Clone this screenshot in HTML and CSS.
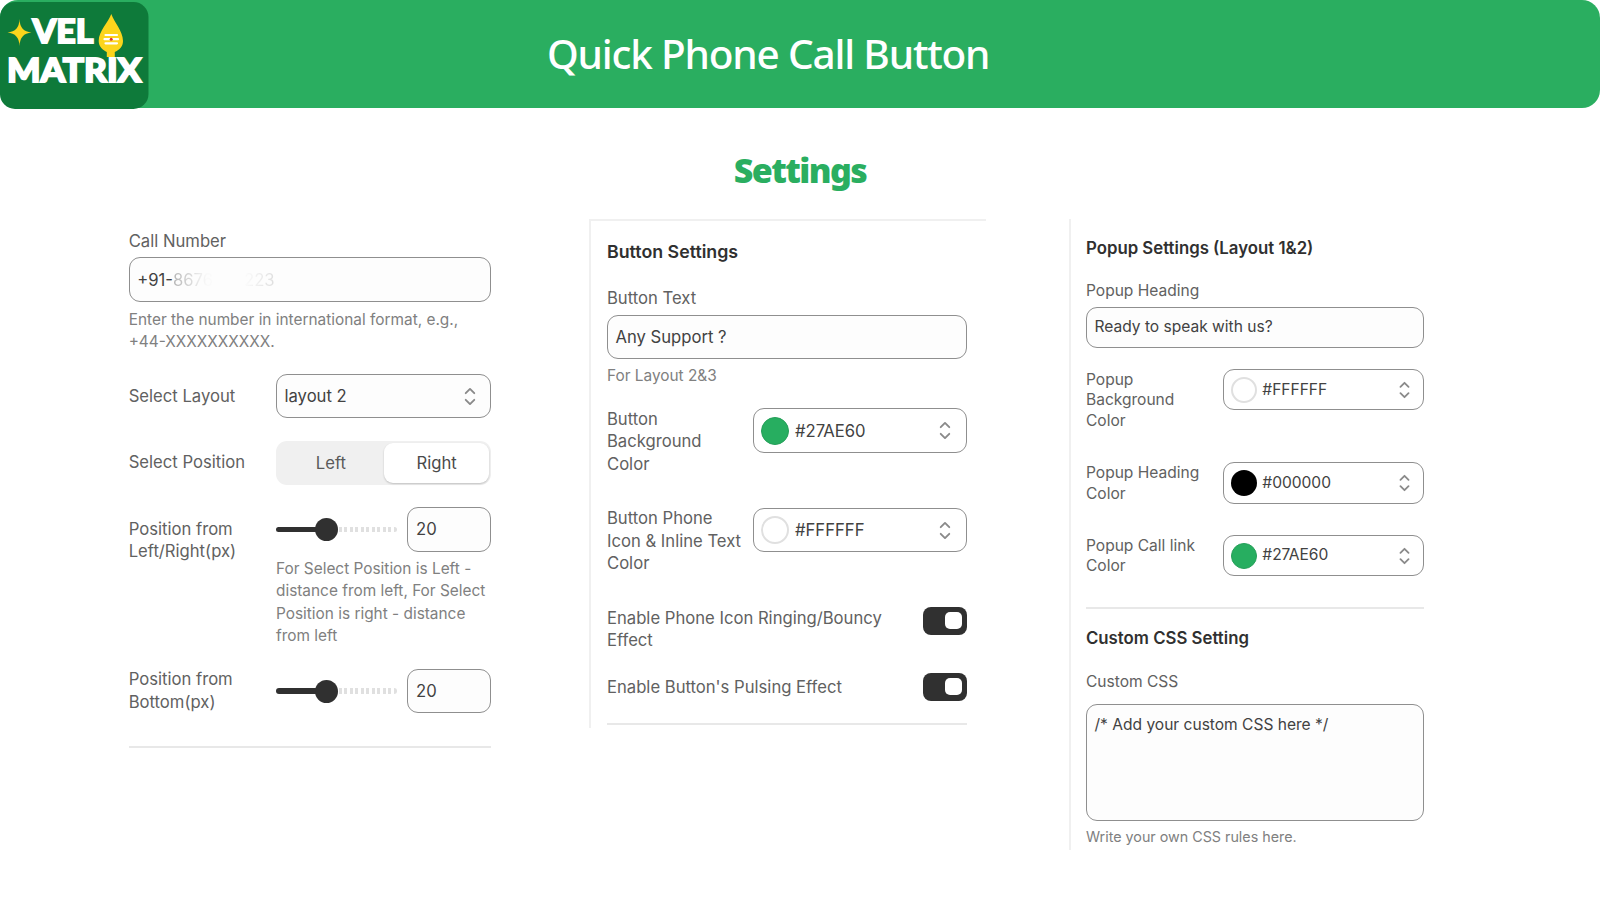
FILE: index.html
```html
<!DOCTYPE html>
<html lang="en">
<head>
    <meta charset="UTF-8">
    <meta name="viewport" content="width=device-width, initial-scale=1.0">
    <title>Quick Phone Call Button - Settings</title>
    <link rel="stylesheet" href="styles.css">
</head>
<body>
    <!-- Shared select arrows -->
    <svg class="defs" width="0" height="0">
        <symbol id="arrows" viewBox="0 0 14 20">
            <path d="M2.5 6.5 L7 2 L11.5 6.5 M2.5 13.5 L7 18 L11.5 13.5" fill="none" stroke="#8a8a8a" stroke-width="2" stroke-linecap="round" stroke-linejoin="round"/>
        </symbol>
    </svg>

    <header class="header">
        <svg class="logo" viewBox="0 0 149 109" width="149" height="109">
            <rect x="0" y="2" width="148.5" height="107" rx="15" fill="#0e7a3a"/>
            <path d="M19.5 19 Q19.8 31.5 31.5 32.5 Q19.8 33.5 19.5 46 Q19.2 33.5 7.5 32.5 Q19.2 31.5 19.5 19Z M19.5 28 L24 32.5 L19.5 37 L15 32.5Z" fill="#fcd51c"/>
            <text class="logo-text" x="32.5" y="43.3" textLength="61" lengthAdjust="spacingAndGlyphs">VEL</text>
            <text class="logo-text" x="7" y="82.3" textLength="134.5" lengthAdjust="spacingAndGlyphs">MATRIX</text>
            <path d="M111.3 14 C114 22 123 31 123 41 C123 47 119 50 114.8 52 V57 H106.8 V52 C103 50 98.7 47 98.7 41 C98.7 31 108.5 22 111.3 14Z" fill="#fcd51c"/>
            <path d="M105.5 35 H117 M104.5 39.2 H118 M105.5 43.3 H117" stroke="#fff" stroke-width="2.2" stroke-linecap="round"/>
            <circle cx="111.2" cy="39.2" r="1.5" fill="#e0322b"/>
        </svg>
        <h1 class="title">Quick Phone Call Button</h1>
    </header>

    <h2 class="subtitle">Settings</h2>

    <main class="panels">
        <section class="panel general">
            <label class="label">Call Number</label>
            <div class="field">+91-<span class="masked">8676</span><span class="masked-end">223</span></div>
            <p class="help">Enter the number in international format, e.g.,<br>+44-XXXXXXXXXX.</p>

            <div class="row">
                <div class="label">Select Layout</div>
                <div class="field select"><span>layout 2</span><svg class="arrows"><use href="#arrows"/></svg></div>
            </div>
            <div class="row">
                <div class="label">Select Position</div>
                <div class="segmented">
                    <div class="segment">Left</div>
                    <div class="segment active">Right</div>
                </div>
            </div>
            <div class="row">
                <div class="label">Position from<br>Left/Right(px)</div>
                <div>
                    <div class="range">
                        <div class="slider"><div class="thumb"></div></div>
                        <div class="field">20</div>
                    </div>
                    <p class="help">For Select Position is Left -<br>distance from left, For Select<br>Position is right - distance<br>from left</p>
                </div>
            </div>
            <div class="row bottom">
                <div class="label">Position from<br>Bottom(px)</div>
                <div class="range">
                    <div class="slider"><div class="thumb"></div></div>
                    <div class="field">20</div>
                </div>
            </div>
            <hr class="divider">
        </section>

        <section class="panel button-panel">
            <h3 class="heading">Button Settings</h3>
            <label class="label">Button Text</label>
            <div class="field">Any Support ?</div>
            <p class="help">For Layout 2&amp;3</p>

            <div class="row">
                <div class="label">Button<br>Background<br>Color</div>
                <div class="field select"><i class="swatch green"></i><span>#27AE60</span><svg class="arrows"><use href="#arrows"/></svg></div>
            </div>
            <div class="row">
                <div class="label">Button Phone<br>Icon &amp; Inline Text<br>Color</div>
                <div class="field select"><i class="swatch white"></i><span>#FFFFFF</span><svg class="arrows"><use href="#arrows"/></svg></div>
            </div>
            <div class="toggle-row">
                <div class="label">Enable Phone Icon Ringing/Bouncy<br>Effect</div>
                <div class="toggle"></div>
            </div>
            <div class="toggle-row">
                <div class="label">Enable Button's Pulsing Effect</div>
                <div class="toggle"></div>
            </div>
            <hr class="divider">
        </section>

        <section class="panel popup-panel">
            <h3 class="heading">Popup Settings (Layout 1&amp;2)</h3>
            <label class="label">Popup Heading</label>
            <div class="field">Ready to speak with us?</div>

            <div class="row tall">
                <div class="label">Popup<br>Background<br>Color</div>
                <div class="field select"><i class="swatch white"></i><span>#FFFFFF</span><svg class="arrows"><use href="#arrows"/></svg></div>
            </div>
            <div class="row">
                <div class="label">Popup Heading<br>Color</div>
                <div class="field select"><i class="swatch black"></i><span>#000000</span><svg class="arrows"><use href="#arrows"/></svg></div>
            </div>
            <div class="row">
                <div class="label">Popup Call link<br>Color</div>
                <div class="field select"><i class="swatch green"></i><span>#27AE60</span><svg class="arrows"><use href="#arrows"/></svg></div>
            </div>
            <hr class="divider">
            <h3 class="heading css-heading">Custom CSS Setting</h3>
            <label class="label">Custom CSS</label>
            <div class="field textarea">/* Add your custom CSS here */</div>
            <p class="help">Write your own CSS rules here.</p>
        </section>
    </main>
</body>
</html>
```
FILE: styles.css
```css
* {
    box-sizing: border-box;
}
body {
    margin: 0;
    height: 900px;
    overflow: hidden;
    background-color: #fff;
    font-family: Inter, "Liberation Sans", sans-serif;
    color: #616161;
}
h1, h2, h3, p {
    margin: 0;
}
.defs {
    display: block;
}

/* Header */
.header {
    display: flex;
    height: 108.4px;
    background-color: #2aae60;
    border-radius: 18px;
}
.logo {
    flex: none;
}
.logo-text {
    font: 900 33px Lato, sans-serif;
    fill: #fff;
    stroke: #fff;
    stroke-width: 1.8px;
}
.title {
    margin-left: 398px;
    padding-top: 26px;
    font: 500 40.5px/56px "Noto Sans", sans-serif;
    letter-spacing: -1.18px;
    color: #fff;
    white-space: nowrap;
}
.subtitle {
    height: 110.6px;
    padding-top: 37px;
    text-align: center;
    font: 900 34px/50px "Noto Sans", sans-serif;
    letter-spacing: -1.6px;
    color: #2aae60;
}

/* Panels */
.panels {
    display: flex;
    align-items: flex-start;
    padding-left: 128.7px;
}
.panel {
    --line: 22.2px;
    --control: 44.5px;
    --text: 16.65px;
    --small: 15.4px;
    --title: 17.8px;
    flex: none;
    font-size: var(--text);
    font-weight: 440;
    line-height: var(--line);
    white-space: nowrap;
}
.label {
    display: block;
}
.heading {
    font-size: var(--title);
    font-weight: 600;
    line-height: var(--line);
    color: #303030;
}
.help {
    font-size: var(--small);
    color: #808080;
}
.field {
    display: flex;
    align-items: center;
    height: var(--control);
    padding: 0 7.5px;
    border: 1.5px solid #8f8f8f;
    border-radius: 11px;
    background-color: #fdfdfd;
    color: #424242;
}
.select {
    justify-content: space-between;
    padding-right: 13.5px;
}
.select span {
    margin-right: auto;
}
.arrows {
    width: 14px;
    height: 19px;
}
.row {
    display: grid;
    align-items: start;
}
.divider {
    height: 2px;
    margin: 0;
    border: 0;
    background-color: #e8e8e8;
}
.swatch {
    width: 28px;
    height: 28px;
    margin-right: 5.5px;
    border-radius: 50%;
}
.green {
    background-color: #27ae60;
    border: 1px solid #259f59;
}
.white {
    background-color: #fff;
    border: 2px solid #e0e0e0;
}
.black {
    background-color: #000;
}

/* First column */
.general {
    width: 362.8px;
    padding-top: 10.7px;
}
.general > .field {
    margin: 5.6px 0 6.8px;
}
.general .row {
    grid-template-columns: 147.3px 1fr;
    margin-top: 22.2px;
}
.general > .help + .row {
    margin-top: 20.8px;
}
.general .row > .label {
    padding-top: 10.8px;
}
.general .bottom > .label {
    padding-top: 0;
    margin-top: -0.4px;
}
.masked {
    background: linear-gradient(90deg, #b5b5b5, #fafafa 85%);
    -webkit-background-clip: text;
    color: transparent;
}
.masked-end {
    margin-left: 31px;
    background: linear-gradient(90deg, #fcfcfc, #dedede);
    -webkit-background-clip: text;
    color: transparent;
}
.segmented {
    display: flex;
    height: var(--control);
    padding: 2px;
    border-radius: 11px;
    background-color: #f0f0f0;
}
.segment {
    flex: 1;
    display: flex;
    align-items: center;
    justify-content: center;
    border-radius: 9px;
    color: #5a5a5a;
}
.active {
    background-color: #fff;
    color: #4a4a4a;
    box-shadow: 0 1px 2px rgba(0,0,0,0.2);
}
.range {
    display: flex;
    align-items: center;
    justify-content: space-between;
}
.range .field {
    width: 84px;
}
.range + .help {
    margin-top: 6.3px;
    margin-bottom: -0.3px;
}
.slider {
    display: flex;
    align-items: center;
    width: 121.3px;
    height: 5.5px;
    padding-left: 38.6px;
    border-radius: 3px;
    background: linear-gradient(#303030, #303030) 0 0 / 50px 100% no-repeat,
        repeating-linear-gradient(90deg, #fff 0 2.2px, #e0e0e0 2.2px 5.5px);
}
.thumb {
    flex: none;
    width: 23px;
    height: 23px;
    border-radius: 50%;
    background-color: #303030;
}
.general .divider {
    margin-top: 33px;
}

/* Second column */
.button-panel {
    width: 397px;
    height: 509px;
    margin-left: 97.5px;
    padding: 20px 19px 0 16px;
    border-top: 2px solid #f0f0f0;
    border-left: 2px solid #f0f0f0;
}
.button-panel .heading {
    margin-bottom: 24px;
}
.button-panel > .field {
    margin: 5.3px 0 6px;
}
.button-panel .row {
    grid-template-columns: 146px 1fr;
    height: 99.3px;
}
.button-panel .help + .row {
    margin-top: 21.1px;
}
.button-panel .row .label {
    margin-top: -0.4px;
}
.button-panel .row .field {
    background-color: #fff;
}
.toggle-row {
    display: flex;
    justify-content: space-between;
    align-items: flex-start;
    height: 66px;
}
.toggle-row + .toggle-row {
    height: 50px;
    padding-top: 2.6px;
}
.toggle-row + .toggle-row .toggle {
    margin-top: -2.6px;
}
.toggle {
    display: flex;
    justify-content: flex-end;
    width: 44.3px;
    height: 27.8px;
    padding: 5.4px;
    border-radius: 8px;
    background-color: #303030;
}
.toggle::after {
    content: "";
    width: 17px;
    height: 17px;
    border-radius: 5px;
    background-color: #fff;
}

/* Third column */
.popup-panel {
    --line: 20.6px;
    --control: 41.3px;
    --text: 15.55px;
    --small: 14.3px;
    --title: 16.8px;
    width: 355px;
    height: 631px;
    margin-left: 83px;
    padding: 19.2px 0 0 15px;
    border-left: 2px solid #f0f0f0;
}
.popup-panel .heading {
    margin-bottom: 22.7px;
}
.popup-panel > .field {
    margin: 5px 0 20.7px;
}
.popup-panel .row {
    grid-template-columns: 137.3px 1fr;
    height: 72.5px;
}
.popup-panel .tall {
    height: 93.3px;
}
.popup-panel .row .field {
    background-color: #fff;
}
.popup-panel .row .label {
    padding-top: 0.7px;
}
.popup-panel .select {
    padding: 0.6px 12px 0 6.5px;
}
.popup-panel .swatch {
    width: 26px;
    height: 26px;
}
.popup-panel .arrows {
    width: 13px;
    height: 18px;
}
.popup-panel .css-heading {
    margin-top: 18.9px;
}
.popup-panel .textarea {
    height: 117px;
    align-items: flex-start;
    margin: 12.4px 0 5.5px;
    padding-top: 9.3px;
}
```
